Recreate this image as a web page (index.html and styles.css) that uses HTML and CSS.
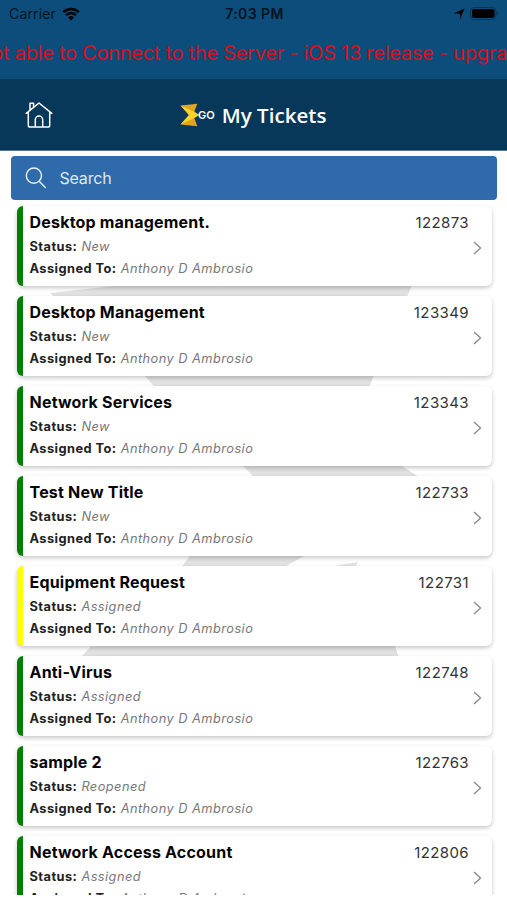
FILE: index.html
```html
<!DOCTYPE html>
<html lang="en">
<head>
    <meta charset="UTF-8">
    <meta name="viewport" content="width=device-width, initial-scale=1.0">
    <title>My Tickets</title>
    <link rel="stylesheet" href="styles.css">
</head>
<body>
    <!-- status bar -->
    <div class="status-bar">
        <div class="carrier">
            <span>Carrier</span>
            <svg width="18" height="14" viewBox="0 0 18 14">
                <path d="M1.3 5.2a11 11 0 0 1 15.4 0M4.1 8.1a7 7 0 0 1 9.8 0" fill="none" stroke="#000" stroke-width="2.5"/>
                <path d="M9 13.4L6.1 10.4a4.1 4.1 0 0 1 5.8 0z"/>
            </svg>
        </div>
        <div class="time">7:03 PM</div>
        <div class="indicators">
            <svg width="12" height="12" viewBox="0 0 12 12">
                <path d="M11.5 .5L7 11.5V6.2L6 5.5H.5z"/>
            </svg>
            <svg width="30" height="13" viewBox="0 0 30 13">
                <rect x=".5" y=".5" width="25.5" height="12" rx="3.5" fill="none" stroke="#083450"/>
                <rect x="2" y="2" width="22.5" height="9" rx="2.2"/>
                <path d="M27.2 4.5q1.8 2 0 4z" fill="#083450"/>
            </svg>
        </div>
    </div>

    <div class="marquee"><span>not able to Connect to the Server - iOS 13 release - upgrade</span></div>

    <!-- title bar -->
    <div class="header">
        <svg class="home" width="28" height="28" viewBox="0 0 28 28">
            <path d="M1.2 12.3L14 2l12.8 10.3M3.3 11v13.2q0 1.8 1.8 1.8h17.8q1.8 0 1.8-1.8V11M10.3 26v-7.2a3.7 3.7 0 0 1 7.4 0V26M5 8.8V2.3h3.6v3.6"/>
        </svg>
        <div class="title">
            <svg width="19" height="24" viewBox="0 0 19 24">
                <path d="M.5 2.5L17.3 .8l-3 8 4.7 3.2-4.7 3 3 8.2L.5 21.5 9 12z" fill="#dca71f"/>
                <path d="M.5 2.5L14.3 8.8 19 12l-4.7 3L.5 21.5 9 12z" fill="#f8d22d"/>
            </svg>
            <span class="go">GO</span>
            <span class="name">My Tickets</span>
        </div>
    </div>

    <div class="search">
        <svg width="22" height="22" viewBox="0 0 22 22">
            <circle cx="8.9" cy="8.6" r="7.6"/>
            <path d="M14.2 14.2L20.3 20.5"/>
        </svg>
        <span>Search</span>
    </div>

    <div class="list">
        <!-- watermark behind the cards -->
        <svg class="watermark" width="507" height="400" viewBox="0 285 507 400">
            <polygon points="50,293 95,288 120,285 412,285 370,385 340,430 402,466 416,475 440,490 304,556 288,565 270,577 340,565 358,562 356,565 385,600 395,646 398,655 410,680 60,680 83,655 91,646 183,565 190,556 260,484 252,475 243,466 153,385 145,376"/>
        </svg>

        <div class="card">
            <div class="info">
                <h3>Desktop management.</h3>
                <p><b>Status:</b> <i>New</i></p>
                <p><b>Assigned To:</b> <i>Anthony D Ambrosio</i></p>
            </div>
            <div class="number">122873</div>
            <svg class="arrow" width="9" height="14" viewBox="0 0 9 14"><path d="M1 1l6.5 6L1 13"/></svg>
        </div>
        <div class="card">
            <div class="info">
                <h3>Desktop Management</h3>
                <p><b>Status:</b> <i>New</i></p>
                <p><b>Assigned To:</b> <i>Anthony D Ambrosio</i></p>
            </div>
            <div class="number">123349</div>
            <svg class="arrow" width="9" height="14" viewBox="0 0 9 14"><path d="M1 1l6.5 6L1 13"/></svg>
        </div>
        <div class="card">
            <div class="info">
                <h3>Network Services</h3>
                <p><b>Status:</b> <i>New</i></p>
                <p><b>Assigned To:</b> <i>Anthony D Ambrosio</i></p>
            </div>
            <div class="number">123343</div>
            <svg class="arrow" width="9" height="14" viewBox="0 0 9 14"><path d="M1 1l6.5 6L1 13"/></svg>
        </div>
        <div class="card">
            <div class="info">
                <h3>Test New Title</h3>
                <p><b>Status:</b> <i>New</i></p>
                <p><b>Assigned To:</b> <i>Anthony D Ambrosio</i></p>
            </div>
            <div class="number">122733</div>
            <svg class="arrow" width="9" height="14" viewBox="0 0 9 14"><path d="M1 1l6.5 6L1 13"/></svg>
        </div>
        <div class="card yellow">
            <div class="info">
                <h3>Equipment Request</h3>
                <p><b>Status:</b> <i>Assigned</i></p>
                <p><b>Assigned To:</b> <i>Anthony D Ambrosio</i></p>
            </div>
            <div class="number">122731</div>
            <svg class="arrow" width="9" height="14" viewBox="0 0 9 14"><path d="M1 1l6.5 6L1 13"/></svg>
        </div>
        <div class="card">
            <div class="info">
                <h3>Anti-Virus</h3>
                <p><b>Status:</b> <i>Assigned</i></p>
                <p><b>Assigned To:</b> <i>Anthony D Ambrosio</i></p>
            </div>
            <div class="number">122748</div>
            <svg class="arrow" width="9" height="14" viewBox="0 0 9 14"><path d="M1 1l6.5 6L1 13"/></svg>
        </div>
        <div class="card">
            <div class="info">
                <h3>sample 2</h3>
                <p><b>Status:</b> <i>Reopened</i></p>
                <p><b>Assigned To:</b> <i>Anthony D Ambrosio</i></p>
            </div>
            <div class="number">122763</div>
            <svg class="arrow" width="9" height="14" viewBox="0 0 9 14"><path d="M1 1l6.5 6L1 13"/></svg>
        </div>
        <div class="card">
            <div class="info">
                <h3>Network Access Account</h3>
                <p><b>Status:</b> <i>Assigned</i></p>
                <p><b>Assigned To:</b> <i>Anthony D Ambrosio</i></p>
            </div>
            <div class="number">122806</div>
            <svg class="arrow" width="9" height="14" viewBox="0 0 9 14"><path d="M1 1l6.5 6L1 13"/></svg>
        </div>
    </div>
</body>
</html>
```
FILE: styles.css
```css
*{
    margin: 0;
    padding: 0;
    box-sizing: border-box;
}

body{
    width: 507px;
    height: 900px;
    overflow: hidden;
    background-color: #fff;
    font-family: Inter, "Liberation Sans", sans-serif;
}

svg{
    display: block;
    flex: none;
}

/* status bar */
.status-bar{
    display: grid;
    grid-template-columns: 1fr auto 1fr;
    align-items: center;
    height: 27px;
    padding: 0 7px 0 9px;
    background-color: #0d4d7c;
    color: #031420;
    font-size: 14px;
}

.carrier{
    display: flex;
    align-items: center;
    gap: 6px;
    letter-spacing: 0.15px;
}

.time{
    font-weight: 600;
    letter-spacing: 0.4px;
}

.indicators{
    display: flex;
    justify-content: flex-end;
    align-items: center;
    gap: 5px;
}

.marquee{
    display: flex;
    justify-content: center;
    height: 52px;
    padding-left: 3px;
    overflow: hidden;
    background-color: #0d4d7c;
    color: #d5101f;
    font-size: 20px;
    line-height: 52px;
    letter-spacing: -0.27px;
    white-space: nowrap;
}

/* title bar */
.header{
    display: flex;
    align-items: center;
    height: 72px;
    padding-left: 25px;
    background-color: #083859;
    border-bottom: 1px solid #55738a;
}

.home{
    fill: none;
    stroke: #fff;
    stroke-width: 1.5;
    stroke-linejoin: round;
    stroke-linecap: round;
}

.title{
    display: flex;
    align-items: center;
    margin-left: 127px;
    color: #fff;
}

.go{
    margin-left: -1px;
    font-size: 11px;
    font-weight: 600;
}

.name{
    margin-left: 7px;
    font-family: "Open Sans", sans-serif;
    font-size: 20.6px;
    font-weight: 600;
}

.search{
    display: flex;
    align-items: center;
    gap: 12.5px;
    height: 44.5px;
    margin: 4.5px 10px 0 11px;
    padding-left: 14px;
    border-radius: 4px;
    background-color: #2f6bab;
    color: #dfe9f4;
    font-size: 16px;
    letter-spacing: -0.2px;
}

.search svg{
    fill: none;
    stroke: #e8f0f8;
    stroke-width: 1.4;
    stroke-linecap: round;
}

/* ticket list, cut off above the bottom of the screen */
.list{
    position: relative;
    height: 695px;
    padding: 6px 15px 0 17px;
    overflow: hidden;
}

.watermark{
    position: absolute;
    top: 85px;
    left: 0;
    fill: #e1e1e1;
}

.card{
    position: relative;
    display: flex;
    height: 80px;
    margin-bottom: 10px;
    padding-left: 6px;
    border-left: 6.5px solid #008000;
    border-radius: 6px;
    background-color: #fff;
    box-shadow: 0 2px 4px rgba(0, 0, 0, 0.22);
}

.yellow{
    border-left-color: #ffff00;
}

.info{
    flex: 1;
    padding: 4px 0 0 0.5px;
}

.card h3{
    margin-bottom: 1px;
    color: #050505;
    font-size: 16px;
    font-weight: 700;
    line-height: 25px;
    letter-spacing: 0.2px;
}

.card p{
    color: #222;
    font-size: 12.8px;
    line-height: 22px;
    letter-spacing: 0.45px;
}

.card b{
    font-weight: 700;
}

.card i{
    color: #777;
}

.number{
    padding-top: 4px;
    color: #333;
    font-size: 15px;
    line-height: 25px;
    letter-spacing: 0.4px;
}

.arrow{
    align-self: center;
    margin: 4px 10.5px 0 3.5px;
    fill: none;
    stroke: #888;
    stroke-width: 1.3;
}
```
